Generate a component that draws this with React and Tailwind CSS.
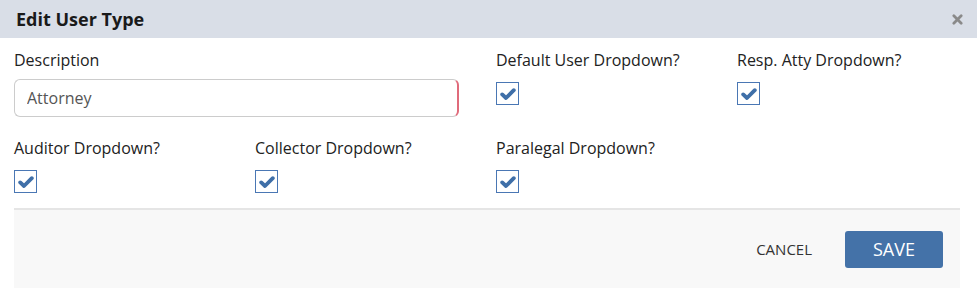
import React from 'react'

function CheckBox() {
  return (
    <div className="flex h-[23px] w-[23px] items-center justify-center border-[1.5px] border-[#4a77b4] bg-white">
      <svg viewBox="0 0 16 16" className="h-[16px] w-[16px]">
        <path d="M2.2 8.4 L6 12 L13.8 4.2" fill="none" stroke="#3f6fa8" strokeWidth="3.8" strokeLinecap="round" strokeLinejoin="round" />
      </svg>
    </div>
  )
}

function CheckField({ label }) {
  return (
    <div className="flex flex-col">
      <label className="h-[24px] text-[16px] leading-[24px] text-[#222]">{label}</label>
      <div className="mt-[10px]">
        <CheckBox />
      </div>
    </div>
  )
}

export default function App() {
  return (
    <div className="h-[295px] w-[977px] bg-white font-['Open_Sans',sans-serif]">
      <div className="flex h-[38px] items-center justify-between bg-[#d9dee7] pl-[16px] pr-[14px]">
        <h2 className="text-[18px] font-bold text-[#1a1a1a]">Edit User Type</h2>
        <svg viewBox="0 0 12 12" className="h-[11px] w-[11px]">
          <path d="M2 2 L10 10 M10 2 L2 10" stroke="#8a8a8a" strokeWidth="3" strokeLinecap="round" />
        </svg>
      </div>

      <div className="px-[14px] pt-[10px]">
        <div className="grid grid-cols-[241px_241px_241px_241px]">
          <div className="col-span-2 flex flex-col">
            <label className="h-[24px] text-[16px] leading-[24px] text-[#222]">Description</label>
            <input
              defaultValue="Attorney"
              className="mt-[7px] h-[38px] w-[445px] rounded-[6px] border border-[#cccccc] border-r-[2px] border-r-[#e06b7b] px-[12px] text-[16px] text-[#555] outline-none"
            />
          </div>
          <CheckField label="Default User Dropdown?" />
          <CheckField label="Resp. Atty Dropdown?" />
        </div>

        <div className="mt-[19px] grid grid-cols-[241px_241px_241px_241px]">
          <CheckField label="Auditor Dropdown?" />
          <CheckField label="Collector Dropdown?" />
          <CheckField label="Paralegal Dropdown?" />
        </div>

        <div className="mt-[15px] mr-[3px] flex h-[80px] items-center justify-end border-t-2 border-[#e5e5e5] bg-[#f8f8f8] pr-[17px]">
          <button className="mr-[33px] text-[15px] text-[#333]">CANCEL</button>
          <button className="h-[37px] w-[98px] rounded-[3px] bg-[#4472a8] text-[18px] text-white">SAVE</button>
        </div>
      </div>
    </div>
  )
}
